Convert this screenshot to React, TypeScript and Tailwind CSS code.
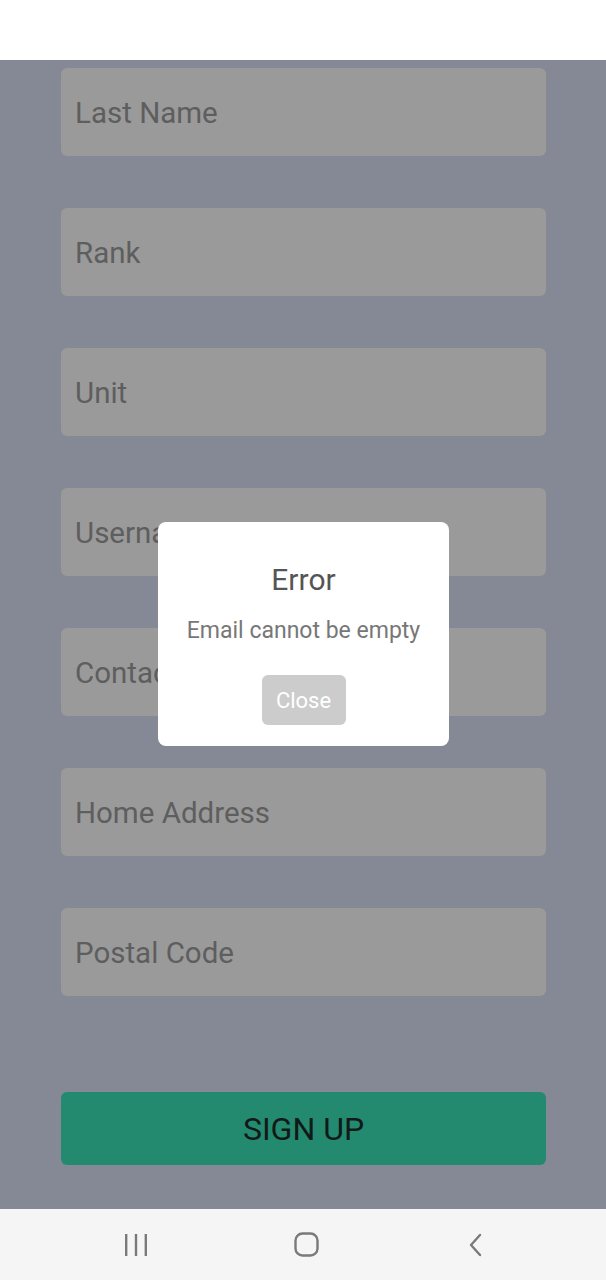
import React from "react";

const fields = ["Last Name", "Rank", "Unit", "Username", "Contact", "Home Address", "Postal Code"];

export default function App() {
  return (
    <div className="relative w-[606px] h-[1280px] overflow-hidden bg-white" style={{ fontFamily: "Roboto, 'Noto Sans', sans-serif" }}>
      <div className="h-[60px] bg-white" />
      <div className="h-[1149px] bg-[#858895] flex flex-col pt-[8px] px-[61px]">
        <div className="flex flex-col gap-[52px]">
          {fields.map((f) => (
            <div key={f} className="h-[88px] w-[485px] rounded-[6px] bg-[#9a9a9a] flex items-center pl-[14px] pt-[2px] text-[29.5px] text-[#5e5e5e]">
              {f}
            </div>
          ))}
        </div>
        <div className="mt-[96px] h-[73px] w-[485px] rounded-[6px] bg-[#238a70] flex items-center justify-center text-[32px] text-[#121a18]">
          SIGN UP
        </div>
      </div>
      <div className="h-[71px] bg-[#f5f5f5] flex items-center pl-[51px] pr-[45px]">
        <div className="flex-1 flex justify-center">
          <svg width="24" height="24" viewBox="0 0 24 24">
            <rect x="1" y="1" width="2.4" height="22" fill="#7a7a7a" />
            <rect x="10.8" y="1" width="2.4" height="22" fill="#7a7a7a" />
            <rect x="20.6" y="1" width="2.4" height="22" fill="#7a7a7a" />
          </svg>
        </div>
        <div className="flex-1 flex justify-center">
          <svg width="25" height="25" viewBox="0 0 25 25">
            <rect x="1.5" y="1.5" width="22" height="22" rx="7" fill="none" stroke="#7a7a7a" strokeWidth="2.4" />
          </svg>
        </div>
        <div className="flex-1 flex justify-center">
          <svg width="16" height="24" viewBox="0 0 16 24">
            <path d="M12 2 L3 12 L12 22" fill="none" stroke="#7a7a7a" strokeWidth="2.4" strokeLinejoin="round" strokeLinecap="round" />
          </svg>
        </div>
      </div>

      <div className="absolute left-[158px] top-[522px] w-[291px] h-[224px] rounded-[8px] bg-white flex flex-col items-center">
        <div className="mt-[40px] text-[30px] leading-[36px] text-[#555555]">Error</div>
        <div className="mt-[19px] text-[23px] leading-[28px] text-[#777777]">Email cannot be empty</div>
        <div className="mt-[30px] w-[84px] h-[50px] rounded-[6px] bg-[#cccccc] flex items-center justify-center text-[22px] text-white">
          Close
        </div>
      </div>
    </div>
  );
}
